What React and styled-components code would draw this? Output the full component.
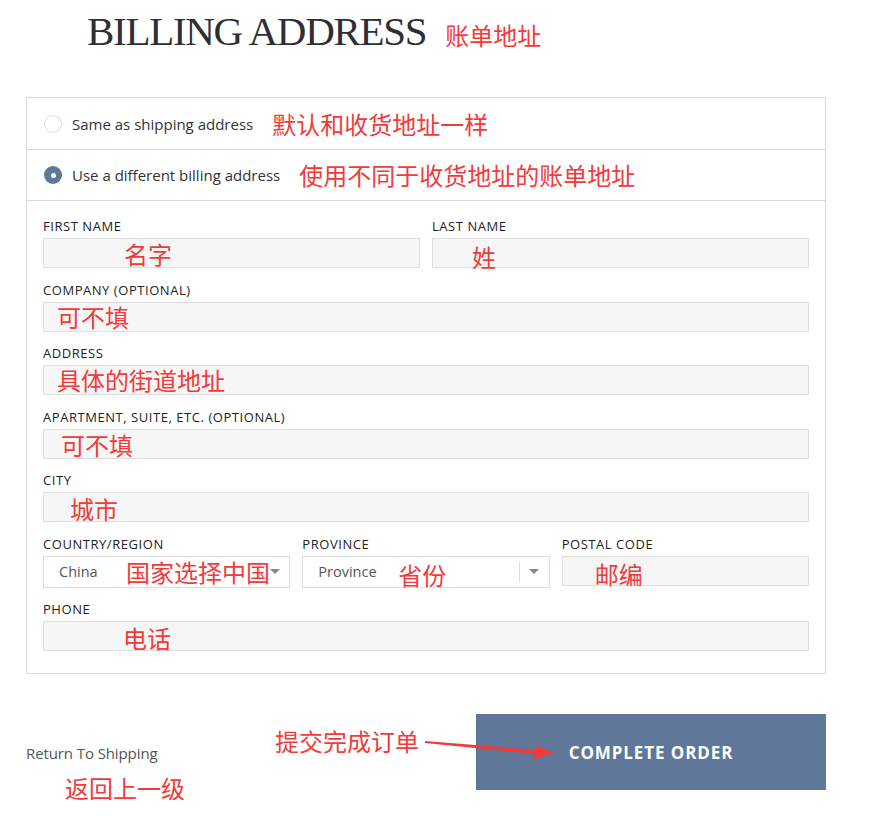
import React from 'react';
import styled, { createGlobalStyle } from 'styled-components';

const GlobalStyle = createGlobalStyle`
  html, body {
    margin: 0;
    padding: 0;
    background: #fff;
  }
  body {
    font-family: 'Open Sans', 'Noto Sans', sans-serif;
    color: #333;
  }
  * { box-sizing: border-box; }
`;

const RED = '#f23a3a';
const SLATE = '#5f7799';

const Page = styled.div`
  width: 871px;
  padding: 6px 0 0 26px;
`;

const TitleRow = styled.div`
  display: flex;
  align-items: baseline;
  gap: 19px;
  padding-left: 61px;
`;

const Title = styled.h1`
  margin: 0;
  font-family: 'Liberation Serif', 'DejaVu Serif', serif;
  font-weight: 400;
  font-size: 41px;
  letter-spacing: -1.3px;
  line-height: 50px;
  color: #2f2f33;
`;

const Note = styled.span`
  font-family: 'Noto Sans CJK SC', sans-serif;
  font-size: 24px;
  line-height: 1;
  color: ${RED};
  white-space: nowrap;
  margin-left: ${({ $gap }) => $gap || 0}px;
`;

const InNote = styled(Note)`
  position: absolute;
  left: ${({ $x }) => $x}px;
  top: ${({ $y }) => $y}px;
  pointer-events: none;
`;

const Box = styled.section`
  margin-top: 41px;
  width: 800px;
  border: 1px solid #d9d9d9;
`;

const RadioRow = styled.label`
  display: flex;
  align-items: center;
  height: ${({ $h }) => $h}px;
  padding-left: 17px;
  border-bottom: 1px solid #d9d9d9;
  font-size: 15px;
  color: #333;
`;

const Radio = styled.span`
  width: 18px;
  height: 18px;
  border-radius: 50%;
  margin-right: 10px;
  flex-shrink: 0;
  border: ${({ $on }) => ($on ? 'none' : '1px solid #d5d9de')};
  background: ${({ $on }) => ($on ? SLATE : '#fff')};
  display: flex;
  align-items: center;
  justify-content: center;
  &::after {
    content: '';
    display: ${({ $on }) => ($on ? 'block' : 'none')};
    width: 5px;
    height: 5px;
    border-radius: 50%;
    background: #fff;
  }
`;

const Fields = styled.div`
  display: flex;
  flex-direction: column;
  gap: 13.5px;
  padding: 17px 16px 22px;
`;

const Row = styled.div`
  display: grid;
  grid-template-columns: ${({ $cols }) => $cols || '1fr'};
  column-gap: 12px;
`;

const Field = styled.div`
  display: flex;
  flex-direction: column;
`;

const Label = styled.div`
  font-size: 13px;
  line-height: 16px;
  letter-spacing: 0.55px;
  margin-bottom: 4px;
  text-transform: uppercase;
  color: #222;
`;

const InputBox = styled.div`
  position: relative;
  height: 30px;
`;

const Input = styled.input`
  width: 100%;
  height: 100%;
  border: 1px solid #dedede;
  background: #f6f6f6;
  font-family: inherit;
  font-size: 14px;
  padding: 0 15px;
  color: #555;
  outline: none;
`;

const SelectBox = styled.div`
  position: relative;
  height: 32px;
  border: 1px solid #dedede;
  background: #fff;
  display: flex;
  align-items: center;
  padding-left: 15px;
  font-size: 14.5px;
  color: #555;
`;

const Caret = styled.span`
  position: absolute;
  right: 0;
  top: 5px;
  bottom: 5px;
  width: 30px;
  border-left: 1px solid #ddd;
  display: flex;
  align-items: center;
  justify-content: center;
  &::after {
    content: '';
    border-left: 5px solid transparent;
    border-right: 5px solid transparent;
    border-top: 5px solid #888;
  }
`;

const Footer = styled.div`
  position: relative;
  display: flex;
  justify-content: space-between;
  align-items: flex-start;
  width: 800px;
  margin-top: 40px;
`;

const Back = styled.div`
  display: flex;
  flex-direction: column;
  padding-top: 31px;
`;

const BackLink = styled.a`
  font-size: 15px;
  line-height: 16px;
  color: #555;
  letter-spacing: -0.1px;
  text-decoration: none;
  cursor: pointer;
`;

const Button = styled.button`
  width: 350px;
  height: 76px;
  border: none;
  background: ${SLATE};
  color: #fff;
  font-family: inherit;
  font-weight: 700;
  font-size: 17px;
  letter-spacing: 0.9px;
  cursor: pointer;
`;

const Callout = styled.div`
  position: absolute;
  left: 249px;
  top: 15px;
  display: flex;
  align-items: flex-start;
  pointer-events: none;
`;

const Arrow = () => (
  <svg width="135" height="30" viewBox="0 0 135 30" style={{ marginLeft: 6, marginTop: 6 }}>
    <polygon points="0,6 112,15 110,10 129,17.5 108,25 110,19 0,8" fill={RED} />
  </svg>
);

export default function App() {
  return (
    <>
      <GlobalStyle />
      <Page>
        <TitleRow>
          <Title>BILLING ADDRESS</Title>
          <Note>账单地址</Note>
        </TitleRow>

        <Box>
          <RadioRow $h={52}>
            <Radio />
            Same as shipping address
            <Note $gap={19}>默认和收货地址一样</Note>
          </RadioRow>
          <RadioRow $h={51}>
            <Radio $on />
            Use a different billing address
            <Note $gap={19}>使用不同于收货地址的账单地址</Note>
          </RadioRow>

          <Fields>
            <Row $cols="1fr 1fr">
              <Field>
                <Label>First name</Label>
                <InputBox>
                  <Input />
                  <InNote $x={81} $y={4}>名字</InNote>
                </InputBox>
              </Field>
              <Field>
                <Label>Last name</Label>
                <InputBox>
                  <Input />
                  <InNote $x={40} $y={7}>姓</InNote>
                </InputBox>
              </Field>
            </Row>
            <Row>
              <Field>
                <Label>Company (optional)</Label>
                <InputBox>
                  <Input />
                  <InNote $x={14} $y={3}>可不填</InNote>
                </InputBox>
              </Field>
            </Row>
            <Row>
              <Field>
                <Label>Address</Label>
                <InputBox>
                  <Input />
                  <InNote $x={14} $y={3}>具体的街道地址</InNote>
                </InputBox>
              </Field>
            </Row>
            <Row>
              <Field>
                <Label>Apartment, suite, etc. (optional)</Label>
                <InputBox>
                  <Input />
                  <InNote $x={18} $y={4}>可不填</InNote>
                </InputBox>
              </Field>
            </Row>
            <Row>
              <Field>
                <Label>City</Label>
                <InputBox>
                  <Input />
                  <InNote $x={27} $y={5}>城市</InNote>
                </InputBox>
              </Field>
            </Row>
            <Row $cols="1fr 1fr 1fr">
              <Field>
                <Label>Country/Region</Label>
                <SelectBox>
                  China
                  <Caret />
                  <InNote $x={82} $y={3}>国家选择中国</InNote>
                </SelectBox>
              </Field>
              <Field>
                <Label>Province</Label>
                <SelectBox>
                  Province
                  <Caret />
                  <InNote $x={95} $y={6}>省份</InNote>
                </SelectBox>
              </Field>
              <Field>
                <Label>Postal code</Label>
                <InputBox>
                  <Input />
                  <InNote $x={33} $y={6}>邮编</InNote>
                </InputBox>
              </Field>
            </Row>
            <Row>
              <Field>
                <Label>Phone</Label>
                <InputBox>
                  <Input />
                  <InNote $x={80} $y={5}>电话</InNote>
                </InputBox>
              </Field>
            </Row>
          </Fields>
        </Box>

        <Footer>
          <Back>
            <BackLink>Return To Shipping</BackLink>
            <Note $gap={39} style={{ marginTop: 15 }}>返回上一级</Note>
          </Back>
          <Callout>
            <Note>提交完成订单</Note>
            <Arrow />
          </Callout>
          <Button>COMPLETE ORDER</Button>
        </Footer>
      </Page>
    </>
  );
}
